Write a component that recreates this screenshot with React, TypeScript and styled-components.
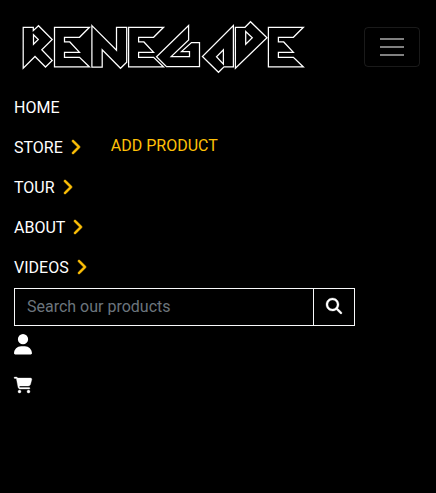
import React from 'react';
import styled, { createGlobalStyle } from 'styled-components';
import { FaChevronRight, FaMagnifyingGlass, FaUser, FaCartShopping } from 'react-icons/fa6';

const GlobalStyle = createGlobalStyle`
  *, *::before, *::after { box-sizing: border-box; }
  body {
    margin: 0;
    background: #000;
    color: #fff;
    font-family: Roboto, sans-serif;
    font-size: 16px;
    line-height: 24px;
  }
`;

const Page = styled.div`
  min-height: 493px;
  background: #000;
`;

const Header = styled.header`
  display: flex;
  justify-content: space-between;
  align-items: center;
  height: 88px;
  padding: 6px 16px 0 14px;
`;

const Logo = styled.svg`
  display: block;
  width: 300px;
  height: 66px;
  fill: none;
  stroke: #fff;
  stroke-width: 1.25;
`;

const Toggler = styled.button`
  display: flex;
  flex-direction: column;
  align-items: center;
  justify-content: center;
  gap: 6px;
  width: 56px;
  height: 40px;
  padding: 0;
  background: transparent;
  border: 1px solid rgba(255, 255, 255, 0.1);
  border-radius: 4px;
`;

const Bar = styled.span`
  width: 24px;
  height: 2px;
  background: #808080;
`;

const Nav = styled.nav`
  padding-left: 14px;
`;

const Row = styled.div`
  display: flex;
  align-items: center;
  height: 40px;
`;

const NavLink = styled.a`
  display: flex;
  align-items: center;
  font-weight: 400;
  color: #fff;
`;

const Chevron = styled(FaChevronRight)`
  width: 10px;
  height: 16px;
  margin: 0 0 2px 7px;
  overflow: visible;
  color: #ffc107;

  path { stroke: #ffc107; stroke-width: 22px; }
`;

const SubLink = styled.a`
  margin-left: 31px;
  padding-bottom: 4px;
  color: #ffc107;
`;

const Search = styled.form`
  display: flex;
  width: 341px;
  height: 38px;
  border: 1px solid #f8f9fa;
`;

const SearchInput = styled.input`
  flex: 1;
  min-width: 0;
  padding: 0 12px;
  border: 0;
  outline: 0;
  background: transparent;
  color: #fff;
  font: inherit;

  &::placeholder { color: #6c757d; opacity: 1; }
`;

const SearchButton = styled.button`
  display: flex;
  align-items: center;
  justify-content: center;
  width: 41px;
  padding: 0 0 2px;
  border: 0;
  border-left: 1px solid #f8f9fa;
  background: transparent;
  color: #fff;
`;

const SearchIcon = styled(FaMagnifyingGlass)`
  width: 16px;
  height: 16px;
  overflow: visible;

  path { stroke: #fff; stroke-width: 10px; }
`;

const IconLink = styled.a`
  display: flex;
  align-items: center;
  height: 40px;
  color: #fff;
`;

const UserIcon = styled(FaUser)`
  width: 18px;
  height: 20.5px;
  margin-bottom: 3px;
`;

const CartIcon = styled(FaCartShopping)`
  width: 18px;
  height: 16px;
  margin-bottom: 2px;
  overflow: visible;

  path { stroke: #fff; stroke-width: 10px; }
`;

const items = [
  { label: 'HOME' },
  { label: 'STORE', menu: true, sub: 'ADD PRODUCT' },
  { label: 'TOUR', menu: true },
  { label: 'ABOUT', menu: true },
  { label: 'VIDEOS', menu: true },
];

const E_SHAPE = 'M0 0H105L75 30H30V44H46L75 75H30V90H75L105 119H0Z';

const LetterE = styled.path`
  stroke-width: 3.75;
`;

export default function App() {
  return (
    <Page>
      <GlobalStyle />
      <Header>
        <Logo viewBox="0 0 300 66" role="img" aria-label="Renegade">
          <path d="M9.2 13.3H19.3V16.6L24.5 11.7L38.2 25.5L27.8 35.8L38.2 46.5L31.5 53L21 42.5L9.2 54.3ZM19.5 20.7L24.3 25.5L19.5 30.3Z" />
          <LetterE d={E_SHAPE} transform="translate(40.5 13.3) scale(.3333)" />
          <path d="M77.9 11.6L102.5 36.2V13.3H112.7V48.3L106.5 54.3L88.2 35.7V53H77.9Z" />
          <LetterE d={E_SHAPE} transform="translate(114.6 13.3) scale(.3333)" />
          <path d="M174.6 11.5V26L157.2 42.5H175.5V37.5H167.5L177.5 28.5H185.5V52.7H152.5L142.5 42.7Z" />
          <path d="M219.4 11.5V52.8H210L204.5 58.3L188.4 42.5ZM209.4 35.8V50.1L202.5 42.7Z" />
          <path d="M221.4 13.3H231L236.5 7.7L253 23.8L221.4 54.3ZM231.7 17.5L238.3 23.8L231.7 30.3Z" />
          <LetterE d={E_SHAPE} transform="translate(254.4 13.3) scale(.3333)" />
        </Logo>
        <Toggler aria-label="Toggle navigation">
          <Bar />
          <Bar />
          <Bar />
        </Toggler>
      </Header>
      <Nav>
        {items.map((item) => (
          <Row key={item.label}>
            <NavLink>
              {item.label}
              {item.menu && <Chevron />}
            </NavLink>
            {item.sub && <SubLink>{item.sub}</SubLink>}
          </Row>
        ))}
        <Search>
          <SearchInput placeholder="Search our products" />
          <SearchButton type="button" aria-label="Search">
            <SearchIcon />
          </SearchButton>
        </Search>
        <IconLink aria-label="Account"><UserIcon /></IconLink>
        <IconLink aria-label="Cart"><CartIcon /></IconLink>
      </Nav>
    </Page>
  );
}
